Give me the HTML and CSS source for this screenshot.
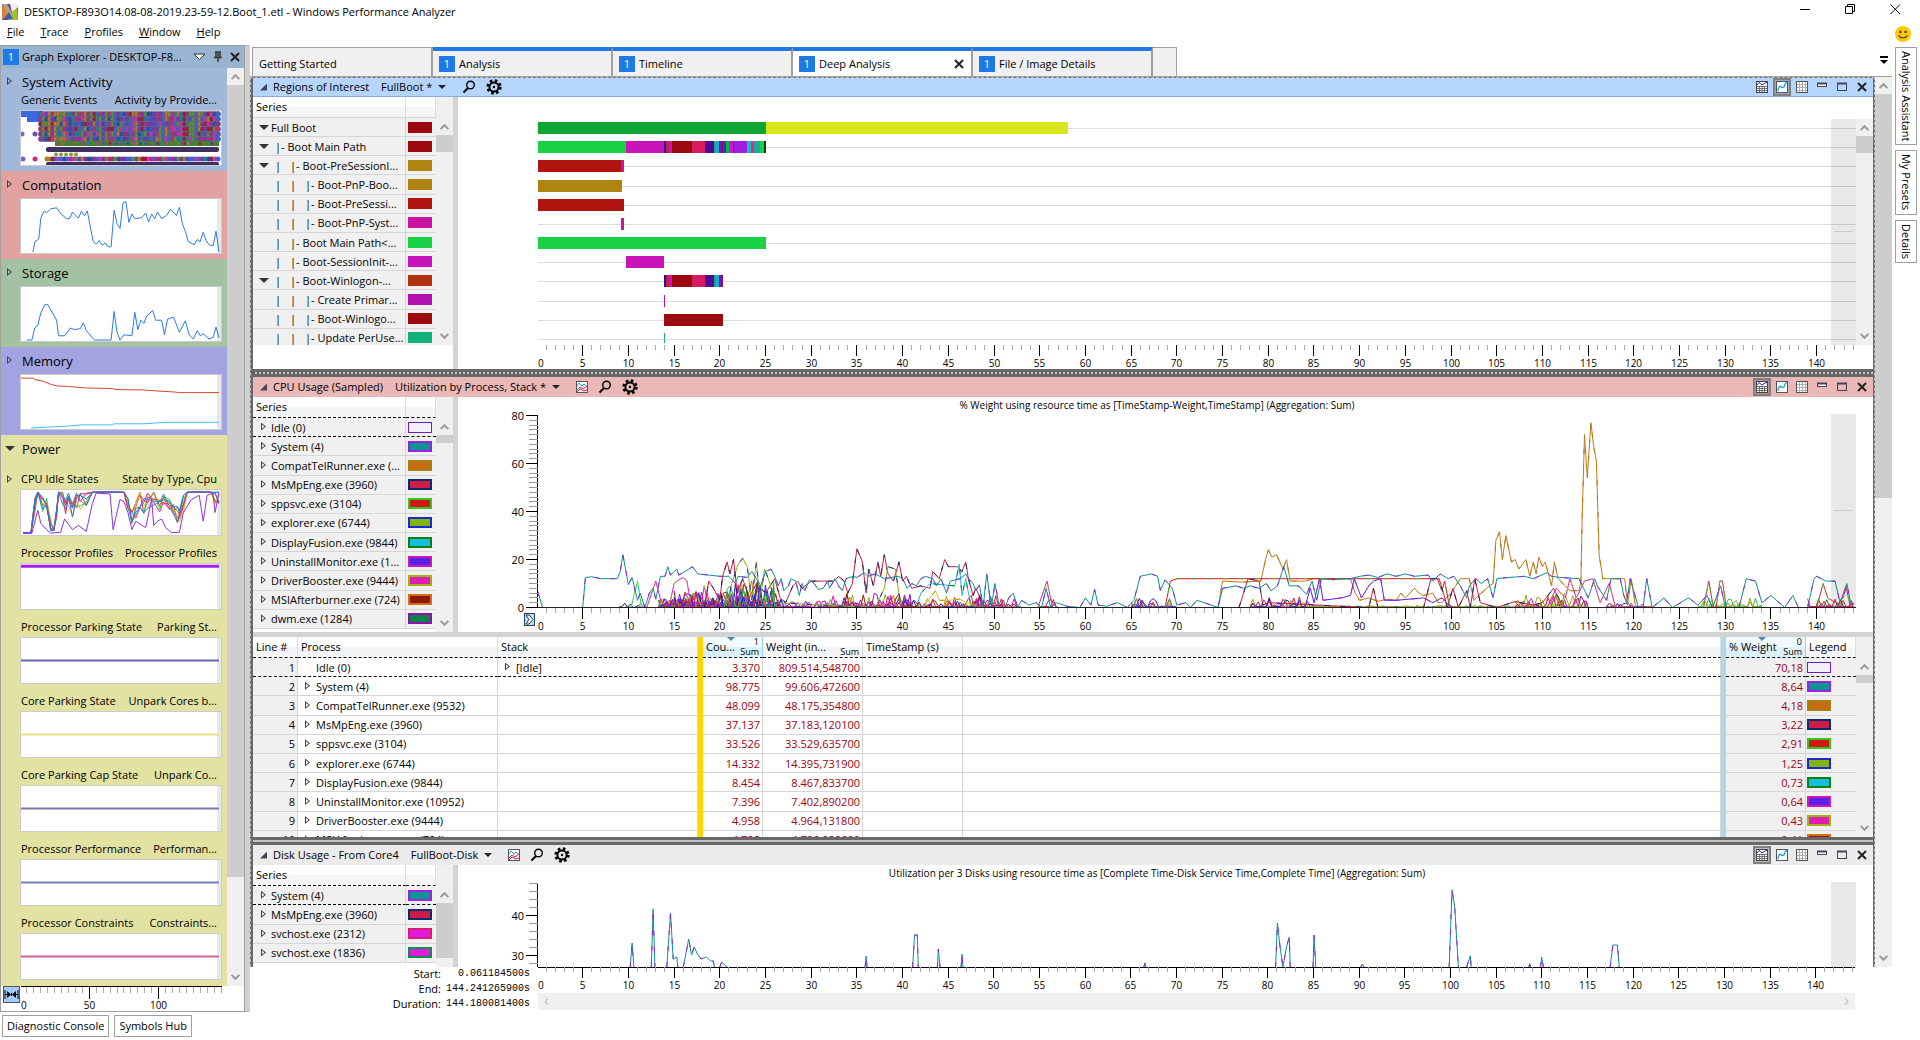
FILE: index.html
```html
<!DOCTYPE html>
<html lang="en">

<head>
    <meta charset="UTF-8">
    <meta name="viewport" content="width=device-width, initial-scale=1.0">
    <title>DESKTOP-F893O14.08-08-2019.23-59-12.Boot_1.etl - Windows Performance Analyzer</title>
    <link rel="stylesheet" href="styles.css">
</head>

<body>
    <!-- shared icons -->
    <svg class="sprite" aria-hidden="true">
        <symbol id="i-search" viewBox="0 0 14 14">
            <circle cx="8.5" cy="5" r="3.8" fill="none" stroke="#000" stroke-width="1.4" />
            <path d="M6 8L1.5 12.5" stroke="#000" stroke-width="2" />
        </symbol>
        <symbol id="i-gear" viewBox="0 0 16 16">
            <circle cx="8" cy="8" r="6.4" fill="none" stroke="#000" stroke-width="2.6" stroke-dasharray="2.6 2.43" />
            <circle cx="8" cy="8" r="4.6" fill="none" stroke="#000" stroke-width="2" />
            <circle cx="8" cy="8" r="1.2" />
        </symbol>
        <symbol id="i-preset" viewBox="0 0 12 12">
            <rect x=".5" y=".5" width="11" height="11" fill="#fff" stroke="#555" />
            <path d="M1 5L3 2L6 5L8 3L11 6" fill="none" stroke="#16a0e0" />
            <path d="M1 9L4 6L7 8L11 5M1 11L4 8L8 10L11 9" fill="none" stroke="#d02040" />
        </symbol>
        <symbol id="i-both" viewBox="0 0 12 12">
            <rect x=".5" y=".5" width="11" height="11" fill="#fff" stroke="#444" />
            <path d="M1 4L3 1.5L6 4L9 2L11 1.5" fill="none" stroke="#2020c0" />
            <path d="M1 5.5H11M1 7.5H11M1 9.5H11M3.5 5V11M6 5V11M8.5 5V11" stroke="#555" stroke-width=".8" />
        </symbol>
        <symbol id="i-graph" viewBox="0 0 12 12">
            <rect x=".5" y=".5" width="11" height="11" fill="#fff" stroke="#555" />
            <path d="M2 10V8L4 5L6 6.5L8 6L9 3L11 1" fill="none" stroke="#0a9ad8" stroke-width="1.2" />
        </symbol>
        <symbol id="i-table" viewBox="0 0 12 12">
            <rect x=".5" y=".5" width="11" height="11" fill="#fff" stroke="#555" />
            <path d="M1 3.5H11M1 6.5H11M1 9.5H11M3.5 1V11M6.5 1V11M9.5 1V11" stroke="#b0b0b0" />
        </symbol>
        <symbol id="i-collapse" viewBox="0 0 12 12">
            <rect x="1.5" y="2.5" width="9" height="3" fill="#fff" stroke="#445" />
            <path d="M1 2.5H11" stroke="#445" stroke-width="2" />
        </symbol>
        <symbol id="i-max" viewBox="0 0 12 12">
            <rect x="1.5" y="2.5" width="9" height="7" fill="none" stroke="#445" />
            <path d="M1 2.5H11" stroke="#445" stroke-width="2" />
        </symbol>
        <symbol id="i-close" viewBox="0 0 12 12">
            <path d="M2 2L10 10M10 2L2 10" stroke="#222" stroke-width="2" />
        </symbol>
        <symbol id="i-up" viewBox="0 0 10 10">
            <path d="M2 7L5 4L8 7" fill="none" stroke="#999" stroke-width="1.5" />
        </symbol>
        <symbol id="i-down" viewBox="0 0 10 10">
            <path d="M2 3L5 6L8 3" fill="none" stroke="#999" stroke-width="1.5" />
        </symbol>
    </svg>

    <header class="titlebar">
        <svg class="app-icon" width="16" height="16" viewBox="0 0 16 16">
            <rect width="16" height="16" fill="#5a4a9a" />
            <path d="M0 1L7 9L0 16Z" fill="#e08030" />
            <path d="M0 0H5L10 9L8 14Z" fill="#b8a080" />
            <path d="M8 14L10 6L15 1L16 16H6Z" fill="#a0c030" />
            <path d="M8 0H16V3L10 8Z" fill="#f0f0f0" />
            <path d="M2 15L7 8L11 15Z" fill="#3860b0" />
        </svg>
        <span class="title">DESKTOP-F893O14.08-08-2019.23-59-12.Boot_1.etl - Windows Performance Analyzer</span>
        <div class="window-buttons">
            <button aria-label="Minimize"><svg width="11" height="11"><path d="M0 5.5H10" stroke="#000" /></svg></button>
            <button aria-label="Restore"><svg width="11" height="11"><path d="M.5 2.5H7.5V9.5H.5ZM2.5 2V.5H9.5V7.5H8" fill="none" stroke="#000" /></svg></button>
            <button aria-label="Close"><svg width="11" height="11"><path d="M.5 .5L10 10M10 .5L.5 10" stroke="#000" /></svg></button>
        </div>
    </header>

    <nav class="menubar">
        <button><u>F</u>ile</button>
        <button><u>T</u>race</button>
        <button><u>P</u>rofiles</button>
        <button><u>W</u>indow</button>
        <button><u>H</u>elp</button>
        <button class="smiley" aria-label="Feedback">
            <svg width="16" height="16"><circle cx="8" cy="8" r="8" fill="#fcc800" /><circle cx="5.5" cy="6" r="1.3" fill="#444" /><circle cx="10.5" cy="6" r="1.3" fill="#444" /><path d="M3.5 9.500Q8 14.500 12.5 9.500" fill="none" stroke="#444" stroke-width="1.2" /></svg>
        </button>
    </nav>

    <div class="workspace">
        <aside class="explorer">
            <div class="explorer-head">
                <span class="badge">1</span>
                <span class="explorer-title">Graph Explorer - DESKTOP-F8...</span>
                <button aria-label="Options"><svg width="14" height="12"><path d="M1 3H12L6.5 8.5Z" fill="#fff" stroke="#333" /></svg></button>
                <button aria-label="Pin"><svg width="10" height="12"><path d="M2 1H8M3 1V6M7 1V6M1 6.5H9M5 7V11" stroke="#333" stroke-width="1.5" /><path d="M4 1H6V6H4Z" fill="#555" /></svg></button>
                <button aria-label="Close"><svg width="12" height="12"><use href="#i-close" /></svg></button>
            </div>
            <div class="explorer-body">
                <div class="groups">
                    <section class="group g-activity">
                        <h2><i class="tri closed"></i>System Activity</h2>
                        <div class="pair tight"><span>Generic Events</span><span>Activity by Provide...</span></div>
                        <div class="thumb tall" data-thumb="events"></div>
                    </section>
                    <section class="group g-computation">
                        <h2><i class="tri closed"></i>Computation</h2>
                        <div class="thumb tall" data-thumb="computation"></div>
                    </section>
                    <section class="group g-storage">
                        <h2><i class="tri closed"></i>Storage</h2>
                        <div class="thumb tall" data-thumb="storage"></div>
                    </section>
                    <section class="group g-memory">
                        <h2><i class="tri closed"></i>Memory</h2>
                        <div class="thumb tall" data-thumb="memory"></div>
                    </section>
                    <section class="group g-power">
                        <h2><i class="tri open"></i>Power</h2>
                        <div class="pair"><i class="tri closed"></i><span>CPU Idle States</span><span>State by Type, Cpu</span></div>
                        <div class="thumb" data-thumb="idle"></div>
                        <div class="pair"><span>Processor Profiles</span><span>Processor Profiles</span></div>
                        <div class="thumb" data-thumb="profiles"></div>
                        <div class="pair"><span>Processor Parking State</span><span>Parking St...</span></div>
                        <div class="thumb" data-thumb="parking"></div>
                        <div class="pair"><span>Core Parking State</span><span>Unpark Cores b...</span></div>
                        <div class="thumb" data-thumb="core"></div>
                        <div class="pair"><span>Core Parking Cap State</span><span>Unpark Co...</span></div>
                        <div class="thumb" data-thumb="cap"></div>
                        <div class="pair"><span>Processor Performance</span><span>Performan...</span></div>
                        <div class="thumb" data-thumb="performance"></div>
                        <div class="pair"><span>Processor Constraints</span><span>Constraints...</span></div>
                        <div class="thumb" data-thumb="constraints"></div>
                    </section>
                </div>
                <div class="scrollbar">
                    <svg class="arrow" viewBox="0 0 10 10"><use href="#i-up" /></svg>
                    <div class="grip grip-explorer"></div>
                    <svg class="arrow end" viewBox="0 0 10 10"><use href="#i-down" /></svg>
                </div>
            </div>
            <div class="explorer-axis">
                <button class="fit" aria-label="Fit"><svg width="15" height="15"><path d="M1 3V12M14 3V12M1 7.5H6M14 7.5H9M7.5 6V9" stroke="#000" /><path d="M3 4L7 7.5L3 11ZM12 4L8 7.5L12 11Z" /></svg></button>
                <div class="axis-small" id="explorer-axis"></div>
            </div>
        </aside>

        <main class="main">
            <div class="tabs">
                <button class="tab plain">Getting Started</button>
                <button class="tab"><span class="badge">1</span>Analysis</button>
                <button class="tab"><span class="badge">1</span>Timeline</button>
                <button class="tab active"><span class="badge">1</span>Deep Analysis<svg class="tab-close" width="12" height="12"><use href="#i-close" /></svg></button>
                <button class="tab"><span class="badge">1</span>File / Image Details</button>
                <span class="tab-stub"></span>
                <button class="tab-menu" aria-label="Tabs"><svg width="8" height="8"><path d="M0 0H8V2H0ZM0 4H8L4 8Z" /></svg></button>
            </div>

            <div class="document">
                <div class="panes">
                    <section class="pane">
                        <div class="pane-head blue">
                            <i class="corner"></i>
                            <h3>Regions of Interest</h3>
                            <button class="preset">FullBoot *</button>
                            <button class="tool" aria-label="Search"><svg width="14" height="14"><use href="#i-search" /></svg></button>
                            <button class="tool" aria-label="Settings"><svg width="16" height="16"><use href="#i-gear" /></svg></button>
                            <div class="views">
                                <button aria-label="Graph and table"><svg width="12" height="12"><use href="#i-both" /></svg></button>
                                <button class="on" aria-label="Graph"><svg width="12" height="12"><use href="#i-graph" /></svg></button>
                                <button aria-label="Table"><svg width="12" height="12"><use href="#i-table" /></svg></button>
                                <button aria-label="Collapse"><svg width="12" height="12"><use href="#i-collapse" /></svg></button>
                                <button aria-label="Maximize"><svg width="12" height="12"><use href="#i-max" /></svg></button>
                                <button aria-label="Close"><svg width="12" height="12"><use href="#i-close" /></svg></button>
                            </div>
                        </div>
                        <div class="pane-body regions">
                            <div class="series-box">
                                <table class="series tree">
                                    <thead><tr><th>Series</th><th></th></tr></thead>
                                    <tbody>
                                        <tr><td><i class="tri open"></i>Full Boot</td><td><b class="swatch s-dark"></b></td></tr>
                                        <tr><td><i class="tri open"></i><i class="gap"></i>|- Boot Main Path</td><td><b class="swatch s-dark"></b></td></tr>
                                        <tr><td><i class="tri open"></i><i class="gap"></i><i class="pipe">|</i>|- Boot-PreSessionI...</td><td><b class="swatch s-gold"></b></td></tr>
                                        <tr><td><i class="tri"></i><i class="gap"></i><i class="pipe">|</i><i class="pipe">|</i>|- Boot-PnP-Boo...</td><td><b class="swatch s-gold"></b></td></tr>
                                        <tr><td><i class="tri"></i><i class="gap"></i><i class="pipe">|</i><i class="pipe">|</i>|- Boot-PreSessi...</td><td><b class="swatch s-red"></b></td></tr>
                                        <tr><td><i class="tri"></i><i class="gap"></i><i class="pipe">|</i><i class="pipe">|</i>|- Boot-PnP-Syst...</td><td><b class="swatch s-pink"></b></td></tr>
                                        <tr><td><i class="tri"></i><i class="gap"></i><i class="pipe">|</i>|- Boot Main Path&lt;...</td><td><b class="swatch s-green"></b></td></tr>
                                        <tr><td><i class="tri"></i><i class="gap"></i><i class="pipe">|</i>|- Boot-SessionInit-...</td><td><b class="swatch s-magenta"></b></td></tr>
                                        <tr><td><i class="tri open"></i><i class="gap"></i><i class="pipe">|</i>|- Boot-Winlogon-...</td><td><b class="swatch s-rust"></b></td></tr>
                                        <tr><td><i class="tri"></i><i class="gap"></i><i class="pipe">|</i><i class="pipe">|</i>|- Create Primar...</td><td><b class="swatch s-purple"></b></td></tr>
                                        <tr><td><i class="tri"></i><i class="gap"></i><i class="pipe">|</i><i class="pipe">|</i>|- Boot-Winlogo...</td><td><b class="swatch s-dark"></b></td></tr>
                                        <tr><td><i class="tri"></i><i class="gap"></i><i class="pipe">|</i><i class="pipe">|</i>|- Update PerUse...</td><td><b class="swatch s-teal"></b></td></tr>
                                    </tbody>
                                </table>
                                <div class="scrollbar under-head">
                                    <svg class="arrow" viewBox="0 0 10 10"><use href="#i-up" /></svg>
                                    <div class="grip"></div>
                                    <svg class="arrow end" viewBox="0 0 10 10"><use href="#i-down" /></svg>
                                </div>
                            </div>
                            <div class="splitter-v"></div>
                            <div class="chart" id="regions-chart"></div>
                            <div class="scrollbar chart-scroll">
                                <svg class="arrow" viewBox="0 0 10 10"><use href="#i-up" /></svg>
                                <div class="grip"></div>
                                <svg class="arrow end" viewBox="0 0 10 10"><use href="#i-down" /></svg>
                            </div>
                        </div>
                    </section>

                    <div class="splitter-pane dotted"></div>

                    <section class="pane">
                        <div class="pane-head pink">
                            <i class="corner"></i>
                            <h3>CPU Usage (Sampled)</h3>
                            <button class="preset">Utilization by Process, Stack *</button>
                            <button class="tool" aria-label="Presets"><svg width="12" height="12"><use href="#i-preset" /></svg></button>
                            <button class="tool" aria-label="Search"><svg width="14" height="14"><use href="#i-search" /></svg></button>
                            <button class="tool" aria-label="Settings"><svg width="16" height="16"><use href="#i-gear" /></svg></button>
                            <div class="views">
                                <button class="on" aria-label="Graph and table"><svg width="12" height="12"><use href="#i-both" /></svg></button>
                                <button aria-label="Graph"><svg width="12" height="12"><use href="#i-graph" /></svg></button>
                                <button aria-label="Table"><svg width="12" height="12"><use href="#i-table" /></svg></button>
                                <button aria-label="Collapse"><svg width="12" height="12"><use href="#i-collapse" /></svg></button>
                                <button aria-label="Maximize"><svg width="12" height="12"><use href="#i-max" /></svg></button>
                                <button aria-label="Close"><svg width="12" height="12"><use href="#i-close" /></svg></button>
                            </div>
                        </div>
                        <div class="pane-body cpu">
                            <div class="series-box">
                                <table class="series focus">
                                    <thead><tr><th>Series</th><th></th></tr></thead>
                                    <tbody>
                                        <tr><td><i class="tri closed"></i>Idle (0)</td><td><b class="swatch p-idle"></b></td></tr>
                                        <tr><td><i class="tri closed"></i>System (4)</td><td><b class="swatch p-system"></b></td></tr>
                                        <tr><td><i class="tri closed"></i>CompatTelRunner.exe (...</td><td><b class="swatch p-compat"></b></td></tr>
                                        <tr><td><i class="tri closed"></i>MsMpEng.exe (3960)</td><td><b class="swatch p-msmp"></b></td></tr>
                                        <tr><td><i class="tri closed"></i>sppsvc.exe (3104)</td><td><b class="swatch p-spp"></b></td></tr>
                                        <tr><td><i class="tri closed"></i>explorer.exe (6744)</td><td><b class="swatch p-explorer"></b></td></tr>
                                        <tr><td><i class="tri closed"></i>DisplayFusion.exe (9844)</td><td><b class="swatch p-fusion"></b></td></tr>
                                        <tr><td><i class="tri closed"></i>UninstallMonitor.exe (1...</td><td><b class="swatch p-uninstall"></b></td></tr>
                                        <tr><td><i class="tri closed"></i>DriverBooster.exe (9444)</td><td><b class="swatch p-driver"></b></td></tr>
                                        <tr><td><i class="tri closed"></i>MSIAfterburner.exe (724)</td><td><b class="swatch p-msi"></b></td></tr>
                                        <tr><td><i class="tri closed"></i>dwm.exe (1284)</td><td><b class="swatch p-dwm"></b></td></tr>
                                    </tbody>
                                </table>
                                <div class="scrollbar under-head">
                                    <svg class="arrow" viewBox="0 0 10 10"><use href="#i-up" /></svg>
                                    <div class="grip short"></div>
                                    <svg class="arrow end" viewBox="0 0 10 10"><use href="#i-down" /></svg>
                                </div>
                            </div>
                            <div class="splitter-v"></div>
                            <div class="chart" id="cpu-chart">
                                <button class="expand" aria-label="Expand axis"><svg width="9" height="11"><path d="M1 1H4L8 5.5L4 10H1L4 5.5Z" fill="#fff" stroke="#334" /></svg></button>
                            </div>
                            <div class="gutter"></div>
                        </div>
                        <div class="splitter-h"></div>
                        <div class="grid-box">
                            <table class="grid">
                                <colgroup>
                                    <col class="w-line"><col class="w-name"><col class="w-name"><col class="w-bar"><col class="w-count"><col class="w-weight"><col class="w-weight"><col><col class="w-bar"><col class="w-percent"><col class="w-legend">
                                </colgroup>
                                <thead>
                                    <tr><th>Line #</th><th>Process</th><th>Stack</th><th class="gold"></th><th class="sorted">Cou...<sup>1</sup><sub>Sum</sub></th><th>Weight (in...<sub>Sum</sub></th><th>TimeStamp (s)</th><th></th><th class="sky"></th><th class="sorted">% Weight<sup>0</sup><sub>Sum</sub></th><th>Legend</th></tr>
                                </thead>
                                <tbody>
                                    <tr><td>1</td><td><i class="tri"></i>Idle (0)</td><td><i class="tri closed"></i>[Idle]</td><td class="gold"></td><td>3.370</td><td>809.514,548700</td><td></td><td></td><td class="sky"></td><td>70,18</td><td><b class="swatch p-idle"></b></td></tr>
                                    <tr><td>2</td><td><i class="tri closed"></i>System (4)</td><td></td><td class="gold"></td><td>98.775</td><td>99.606,472600</td><td></td><td></td><td class="sky"></td><td>8,64</td><td><b class="swatch p-system"></b></td></tr>
                                    <tr><td>3</td><td><i class="tri closed"></i>CompatTelRunner.exe (9532)</td><td></td><td class="gold"></td><td>48.099</td><td>48.175,354800</td><td></td><td></td><td class="sky"></td><td>4,18</td><td><b class="swatch p-compat"></b></td></tr>
                                    <tr><td>4</td><td><i class="tri closed"></i>MsMpEng.exe (3960)</td><td></td><td class="gold"></td><td>37.137</td><td>37.183,120100</td><td></td><td></td><td class="sky"></td><td>3,22</td><td><b class="swatch p-msmp"></b></td></tr>
                                    <tr><td>5</td><td><i class="tri closed"></i>sppsvc.exe (3104)</td><td></td><td class="gold"></td><td>33.526</td><td>33.529,635700</td><td></td><td></td><td class="sky"></td><td>2,91</td><td><b class="swatch p-spp"></b></td></tr>
                                    <tr><td>6</td><td><i class="tri closed"></i>explorer.exe (6744)</td><td></td><td class="gold"></td><td>14.332</td><td>14.395,731900</td><td></td><td></td><td class="sky"></td><td>1,25</td><td><b class="swatch p-explorer"></b></td></tr>
                                    <tr><td>7</td><td><i class="tri closed"></i>DisplayFusion.exe (9844)</td><td></td><td class="gold"></td><td>8.454</td><td>8.467,833700</td><td></td><td></td><td class="sky"></td><td>0,73</td><td><b class="swatch p-fusion"></b></td></tr>
                                    <tr><td>8</td><td><i class="tri closed"></i>UninstallMonitor.exe (10952)</td><td></td><td class="gold"></td><td>7.396</td><td>7.402,890200</td><td></td><td></td><td class="sky"></td><td>0,64</td><td><b class="swatch p-uninstall"></b></td></tr>
                                    <tr><td>9</td><td><i class="tri closed"></i>DriverBooster.exe (9444)</td><td></td><td class="gold"></td><td>4.958</td><td>4.964,131800</td><td></td><td></td><td class="sky"></td><td>0,43</td><td><b class="swatch p-driver"></b></td></tr>
                                    <tr><td>10</td><td><i class="tri closed"></i>MSIAfterburner.exe (724)</td><td></td><td class="gold"></td><td>4.738</td><td>4.736,088600</td><td></td><td></td><td class="sky"></td><td>0,41</td><td><b class="swatch p-msi"></b></td></tr>
                                </tbody>
                            </table>
                            <div class="scrollbar under-head">
                                <svg class="arrow" viewBox="0 0 10 10"><use href="#i-up" /></svg>
                                <div class="grip short"></div>
                                <svg class="arrow end" viewBox="0 0 10 10"><use href="#i-down" /></svg>
                            </div>
                        </div>
                    </section>

                    <div class="splitter-pane"></div>

                    <section class="pane last">
                        <div class="pane-head grey">
                            <i class="corner"></i>
                            <h3>Disk Usage - From Core4</h3>
                            <button class="preset">FullBoot-Disk</button>
                            <button class="tool" aria-label="Presets"><svg width="12" height="12"><use href="#i-preset" /></svg></button>
                            <button class="tool" aria-label="Search"><svg width="14" height="14"><use href="#i-search" /></svg></button>
                            <button class="tool" aria-label="Settings"><svg width="16" height="16"><use href="#i-gear" /></svg></button>
                            <div class="views">
                                <button class="on" aria-label="Graph and table"><svg width="12" height="12"><use href="#i-both" /></svg></button>
                                <button aria-label="Graph"><svg width="12" height="12"><use href="#i-graph" /></svg></button>
                                <button aria-label="Table"><svg width="12" height="12"><use href="#i-table" /></svg></button>
                                <button aria-label="Collapse"><svg width="12" height="12"><use href="#i-collapse" /></svg></button>
                                <button aria-label="Maximize"><svg width="12" height="12"><use href="#i-max" /></svg></button>
                                <button aria-label="Close"><svg width="12" height="12"><use href="#i-close" /></svg></button>
                            </div>
                        </div>
                        <div class="pane-body disk">
                            <div class="series-box">
                                <table class="series focus">
                                    <thead><tr><th>Series</th><th></th></tr></thead>
                                    <tbody>
                                        <tr><td><i class="tri closed"></i>System (4)</td><td><b class="swatch p-system"></b></td></tr>
                                        <tr><td><i class="tri closed"></i>MsMpEng.exe (3960)</td><td><b class="swatch p-msmp"></b></td></tr>
                                        <tr><td><i class="tri closed"></i>svchost.exe (2312)</td><td><b class="swatch p-svc1"></b></td></tr>
                                        <tr><td><i class="tri closed"></i>svchost.exe (1836)</td><td><b class="swatch p-svc2"></b></td></tr>
                                    </tbody>
                                </table>
                                <div class="scrollbar under-head">
                                    <svg class="arrow" viewBox="0 0 10 10"><use href="#i-up" /></svg>
                                    <div class="grip long"></div>
                                </div>
                            </div>
                            <div class="splitter-v"></div>
                            <div class="chart" id="disk-chart"></div>
                            <div class="gutter"></div>
                        </div>
                    </section>
                </div>
                <div class="scrollbar doc-scroll">
                    <svg class="arrow" viewBox="0 0 10 10"><use href="#i-up" /></svg>
                    <div class="grip grip-doc"></div>
                    <svg class="arrow end" viewBox="0 0 10 10"><use href="#i-down" /></svg>
                </div>
            </div>

            <div class="timeline">
                <dl class="range">
                    <dt>Start:</dt><dd>0.061184500s</dd>
                    <dt>End:</dt><dd>144.241265900s</dd>
                    <dt>Duration:</dt><dd>144.180081400s</dd>
                </dl>
                <div class="timeline-axis">
                    <div id="timeline-axis"></div>
                    <div class="hscroll"><span>&#8249;</span><span>&#8250;</span></div>
                </div>
            </div>
        </main>

        <aside class="side-tabs">
            <button>Analysis Assistant</button>
            <button>My Presets</button>
            <button>Details</button>
        </aside>
    </div>

    <footer class="bottom-tabs">
        <button>Diagnostic Console</button>
        <button>Symbols Hub</button>
    </footer>

    <script src="script.js"></script>
</body>

</html>
```
FILE: styles.css
```css
* {
    box-sizing: border-box;
}

body {
    margin: 0;
    height: 100vh;
    display: flex;
    flex-direction: column;
    overflow: hidden;
    background: #fff;
    color: #000;
    font-family: "Open Sans", "Noto Sans", sans-serif;
    font-size: 11px;
    line-height: 16px;
}

button {
    font: inherit;
    color: inherit;
    background: none;
    border: 0;
    padding: 0;
    white-space: nowrap;
}

h2,
h3 {
    margin: 0;
    font-weight: normal;
}

svg {
    display: block;
}

.sprite {
    position: absolute;
    width: 0;
    height: 0;
}

/* window chrome */
.titlebar {
    display: flex;
    align-items: center;
    height: 23px;
    padding: 0 2px;
    gap: 6px;
}

.window-buttons {
    display: flex;
    margin-left: auto;
    padding-bottom: 4px;
}

.window-buttons button {
    width: 45px;
    display: flex;
    justify-content: center;
}

.menubar {
    display: flex;
    align-items: center;
    gap: 16px;
    height: 22px;
    padding: 0 9px 4px 7px;
}

.smiley {
    margin: 4px 0 0 auto;
}

.workspace {
    flex: 1;
    display: flex;
    min-height: 0;
}

.badge {
    width: 16px;
    height: 16px;
    background: #1e78e6;
    color: #fff;
    text-align: center;
    flex-shrink: 0;
}

/* graph explorer */
.explorer {
    width: 250px;
    display: flex;
    flex-direction: column;
    border: 1px solid #a0a0a0;
    border-width: 1px 0 1px 1px;
    border-right: 5px solid #d0d0d0;
    flex-shrink: 0;
}

.explorer-head {
    display: flex;
    align-items: center;
    gap: 6px;
    height: 22px;
    padding: 0 3px 0 2px;
    background: #99b4d1;
    border-right: 1px solid #a0a0a0;
}

.explorer-head .badge {
    margin-right: -3px;
}

.explorer-title {
    flex: 1;
    min-width: 0;
    white-space: nowrap;
}

.explorer-body {
    flex: 1;
    display: flex;
    min-height: 0;
    border-right: 1px solid #a0a0a0;
}

.groups {
    flex: 1;
    overflow: hidden;
    background: #e2e2a3;
}

.group {
    padding: 0 5px 5px 19px;
}

.group h2 {
    display: flex;
    align-items: center;
    height: 27px;
    font-size: 13px;
}

.group .tri {
    margin: 0 1px 0 -15px;
}

.g-activity { background: #a2b8da; }
.g-computation { background: #e2a2a2; }
.g-storage { background: #a3c2a3; }
.g-memory { background: #a3a3e2; }
.g-power { background: #e2e2a3; }

.pair {
    display: flex;
    height: 27px;
    padding: 9px 5px 0 1px;
    white-space: nowrap;
}

.pair .tri {
    margin: 4px 0 0 -15px;
}

.group h2 {
    padding-left: 1px;
}

.pair span:last-child {
    margin-left: auto;
}

.pair.tight {
    height: 15px;
    padding-top: 0;
    line-height: 9px;
}

.thumb {
    height: 47px;
    background: #fff;
    border: 1px solid #ccc;
    overflow: hidden;
}

.thumb.tall {
    height: 56px;
}

.explorer-axis {
    display: flex;
    height: 25px;
    border-right: 1px solid #a0a0a0;
}

.fit {
    width: 17px;
    height: 17px;
    margin-left: 2px;
    background: #a8ccf8;
    border: 1px solid #555;
}

.axis-small {
    flex: 1;
    margin-right: 22px;
}

/* tree triangles */
.tri {
    display: inline-block;
    width: 15px;
    height: 9px;
    flex-shrink: 0;
    position: relative;
}

.tri::before {
    content: "";
    position: absolute;
}

.tri.closed::before {
    left: 1px;
    top: 0;
    width: 5px;
    height: 8px;
    background: #444;
    clip-path: polygon(0 0, 100% 50%, 0 100%, 0 0, 20% 25%, 20% 75%, 70% 50%, 20% 25%);
}

.tri.open::before {
    left: -1px;
    top: 2px;
    border: 5px solid transparent;
    border-top-color: #333;
    border-bottom: 0;
}

/* scrollbars */
.scrollbar {
    width: 17px;
    display: flex;
    flex-direction: column;
    flex-shrink: 0;
    background: #f0f0f0;
}

.scrollbar .arrow {
    width: 13px;
    height: 13px;
    margin: 2px;
    flex-shrink: 0;
}

.scrollbar .end {
    margin-top: auto;
}

.scrollbar.under-head {
    padding-top: 21px;
}

.grip {
    height: 17px;
    background: #cdcdcd;
}

.grip.short {
    height: 8px;
}

.grip.long {
    height: 55px;
}

.grip-explorer {
    height: 792px;
}

.grip-doc {
    height: 404px;
}

.doc-scroll {
    width: 17px;
}

/* tabs */
.main {
    flex: 1;
    display: flex;
    flex-direction: column;
    min-width: 0;
}

.tabs {
    display: flex;
    align-items: flex-end;
    height: 31px;
    padding-left: 2px;
}

.tab {
    display: flex;
    align-items: center;
    gap: 4px;
    width: 180px;
    height: 29px;
    padding: 0 6px;
    background: #f0f0f0;
    border-top: 4px solid #1e78e6;
    border-right: 2px solid #a0a0a0;
}

.tab.plain {
    width: 181px;
    border-top: 1px solid #a0a0a0;
    border-left: 1px solid #a0a0a0;
    padding-top: 3px;
}

.tab.active {
    background: #fff;
}

.tab-close {
    margin-left: auto;
}

.tab-stub {
    width: 24px;
    height: 29px;
    background: #f0f0f0;
    border: 1px solid #a0a0a0;
    border-width: 1px 1px 0 0;
}

.tab-menu {
    margin: 0 4px 12px auto;
}

/* document */
.document {
    flex: 1;
    display: flex;
    min-height: 0;
    border-top: 1px solid #a0a0a0;
}

.panes {
    flex: 1;
    display: flex;
    flex-direction: column;
    min-width: 0;
    padding: 0 1px 0 2px;
    background: #686868;
    border: 1px dashed #bbb;
    border-bottom: 0;
}

.pane {
    background: #fff;
    flex-shrink: 0;
}

.pane.last {
    flex: 1;
    overflow: hidden;
    min-height: 0;
}

.pane-head {
    display: flex;
    align-items: center;
    height: 20px;
    padding: 0 2px 0 7px;
}

.pane-head h3 {
    margin: 0 12px 0 6px;
    font-size: 11px;
    white-space: nowrap;
}

.pane-head.blue {
    height: 19px;
    background: #b5d5ff;
    border-bottom: 1px solid #8aacdc;
}

.pane-head.pink { background: #eab8b7; }
.pane-head.grey { background: #ebebeb; }

.corner {
    width: 7px;
    height: 7px;
    background: #445;
    clip-path: polygon(100% 0, 100% 100%, 0 100%);
}

.preset::after {
    content: "";
    display: inline-block;
    margin: 0 11px 2px 6px;
    border: 4px solid transparent;
    border-top-color: #222;
    border-bottom: 0;
}

.tool {
    margin: 0 5px;
}

.views {
    display: flex;
    gap: 2px;
    margin-left: auto;
}

.views button {
    width: 18px;
    height: 18px;
    display: flex;
    align-items: center;
    justify-content: center;
    border: 1px solid transparent;
}

.views .on {
    background: rgba(0, 0, 0, 0.2);
    border: 2px solid #808080;
}

.pane-body {
    display: flex;
}

.regions { height: 272px; }
.cpu { height: 235px; }
.disk { height: 102px; }

.series-box {
    width: 200px;
    display: flex;
    overflow: hidden;
    flex-shrink: 0;
}

.regions .series-box {
    margin-bottom: 24px;
}

.splitter-v {
    width: 5px;
    background: #d3d3d3;
}

.splitter-h {
    height: 5px;
    background: #d3d3d3;
}

.splitter-pane {
    height: 8px;
    border: 2px solid #686868;
    border-width: 3px 0;
    background: #c0c0c0;
    flex-shrink: 0;
}

.splitter-pane.dotted {
    background: repeating-linear-gradient(90deg, #555 0 2px, #ccc 2px 4px);
}

.chart {
    flex: 1;
    min-width: 0;
    position: relative;
}

.chart-scroll {
    margin: 22px 0 24px;
}

.gutter {
    width: 17px;
}

.expand {
    position: absolute;
    left: 66px;
    bottom: 6px;
    width: 11px;
    height: 13px;
    background: #bcdcf4;
    border: 1px solid #246;
}

/* series lists and grid */
table {
    border-collapse: separate;
    border-spacing: 0;
    table-layout: fixed;
}

th,
td {
    padding: 0;
    overflow: hidden;
    white-space: nowrap;
    text-align: left;
    font-weight: normal;
}

thead tr {
    height: 21px;
}

thead th {
    background: linear-gradient(#fff 50%, #f4f5f7 50%);
    border-right: 1px solid #ddd;
    border-bottom: 1px solid #d5d5d5;
}

tbody td {
    height: 19px;
    line-height: 17px;
    border-bottom: 1px solid #d6d6d6;
    border-right: 1px solid #d6d6d6;
}

.series {
    width: 183px;
    flex-shrink: 0;
}

.series th:first-child {
    width: 153px;
    padding-left: 3px;
}

.series tbody {
    background: #f0f0f0;
}

.series td:first-child {
    padding-left: 7px;
}

.series td:last-child {
    border-right: 0;
    padding-left: 2px;
}

.series .tri {
    width: 11px;
}

.tree {
    height: 251px;
}

.cpu .series {
    height: 232px;
}

.disk .series {
    height: 98px;
}

.gap {
    display: inline-block;
    width: 4px;
}

.pipe {
    display: inline-block;
    width: 15px;
    font-style: normal;
}

.focus thead th,
.grid thead th {
    border-bottom: 1px dashed #000;
}

.focus tbody tr:first-child td,
.grid tbody tr:first-child td {
    border-bottom: 1px dashed #000;
}

.swatch {
    display: block;
    width: 24px;
    height: 11px;
    border: 2px solid transparent;
}

.s-dark { background: #9c0a10; border: 0; }
.s-gold { background: #b0850f; border: 0; }
.s-red { background: #b0140e; border: 0; }
.s-pink { background: #c814a0; border: 0; }
.s-green { background: #1ad044; border: 0; }
.s-magenta { background: #c814b8; border: 0; }
.s-rust { background: #b03010; border: 0; }
.s-purple { background: #b410b0; border: 0; }
.s-teal { background: #10b07a; border: 0; }

.p-idle { border: 1px solid #6a20c0; background: #f2f0f6; }
.p-system { border-color: #9c20e8; background: #0a9490; }
.p-compat { border-color: #a8820e; background: #c86c14; }
.p-msmp { border-color: #062c70; background: #d01c44; }
.p-spp { border-color: #34c818; background: #d01818; }
.p-explorer { border-color: #1c28d0; background: #84b410; }
.p-fusion { border-color: #088414; background: #1cbcdc; }
.p-uninstall { border-color: #cc18b8; background: #5a20e4; }
.p-driver { border-color: #a0b010; background: #e01cb4; }
.p-msi { border-color: #d47014; background: #901808; }
.p-dwm { border-color: #9010b0; background: #088444; }
.p-svc1 { border-color: #e01c70; background: #e01cdc; }
.p-svc2 { border-color: #088c50; background: #e01cdc; }

.grid-box {
    display: flex;
    height: 200px;
    overflow: hidden;
}

.grid {
    width: 100%;
    height: 213px;
}

.w-line { width: 45px; }
.w-name { width: 200px; }
.w-bar { width: 5px; }
.w-count { width: 60px; }
.w-weight { width: 100px; }
.w-percent { width: 80px; }
.w-legend { width: 50px; }

.grid .tri.closed::before {
    left: 4px;
}

.grid th {
    position: relative;
    padding-left: 3px;
}

.grid sup,
.grid sub {
    position: absolute;
    right: 3px;
    font-size: 9px;
    line-height: 9px;
}

.grid sup { top: 0; }
.grid sub { bottom: 1px; }

.grid th.sorted {
    background: linear-gradient(#f0faff 50%, #dcf0fa 50%);
    border-right-color: #96d4f4;
}

.grid th.sorted::before {
    content: "";
    position: absolute;
    top: 0;
    left: 40%;
    border: 4px solid transparent;
    border-top-color: #4c8cb0;
    border-bottom: 0;
}

.grid td:nth-child(1) {
    background: #f0f0f0;
    text-align: right;
    padding-right: 2px;
}

.grid td:nth-child(2),
.grid td:nth-child(3) {
    padding-left: 3px;
}

.grid td:nth-child(5),
.grid td:nth-child(6),
.grid td:nth-child(10) {
    text-align: right;
    padding-right: 2px;
    color: #a00010;
}

.grid td:nth-child(10),
.grid td:nth-child(11) {
    background: #f0f0f0;
}

.grid td:nth-child(11) {
    border-right: 0;
    padding-left: 1px;
}

.grid th.gold,
.grid td.gold,
.grid tr:first-child td.gold {
    background: #ffd400;
    border: 0;
}

.grid th.sky,
.grid td.sky,
.grid tr:first-child td.sky {
    background: #add8e6;
    border: 0;
}

/* time range footer */
.timeline {
    display: flex;
    height: 45px;
    padding-right: 37px;
}

.range {
    display: grid;
    grid-template-columns: 191px 1fr;
    grid-auto-rows: 15px;
    width: 280px;
    margin: 0;
    line-height: 14px;
    text-align: right;
}

.range dd {
    margin: 0;
    font-family: "Liberation Mono", monospace;
    font-size: 10px;
}

.timeline-axis {
    flex: 1;
    margin-left: 8px;
    min-width: 0;
}

.hscroll {
    display: flex;
    justify-content: space-between;
    height: 17px;
    padding: 0 6px;
    background: #f0f0f0;
    color: #c0c0c0;
    font-size: 16px;
    line-height: 14px;
}

/* docked tabs */
.side-tabs {
    display: flex;
    flex-direction: column;
    gap: 5px;
    width: 28px;
    padding: 2px 3px;
    flex-shrink: 0;
}

.side-tabs button {
    writing-mode: vertical-rl;
    width: 22px;
    padding: 3px 2px;
    border: 1px solid #a0a0a0;
}

.bottom-tabs {
    display: flex;
    gap: 5px;
    height: 28px;
    padding: 3px 2px;
}

.bottom-tabs button {
    padding: 0 4px;
    border: 1px solid #a0a0a0;
}

svg text {
    font-size: 10px;
}

svg .big {
    font-size: 11px;
}
```
FILE: script.js
```js
const T0 = 0;
const T1 = 144.3;
const PLOT_LEFT = 80;
const ORIGIN = PLOT_LEFT - 1;

// small seeded generator so the background activity is the same on each load
let seed = 7;
function rnd() {
    seed = (seed * 16807) % 2147483647;
    return seed / 2147483647;
}

function svg(w, h, inner) {
    return `<svg width="${w}" height="${h}">${inner}</svg>`;
}

function line(x1, y1, x2, y2, color) {
    return `<path d="M${x1} ${y1}L${x2} ${y2}" stroke="${color}"/>`;
}

function poly(points, color, extra) {
    const p = points.map(q => q[0].toFixed(1) + ',' + q[1].toFixed(1)).join(' ');
    return `<polyline points="${p}" fill="none" stroke="${color}" ${extra || ''}/>`;
}

function timeAxis(left, width, y) {
    const x = t => Math.floor(left + t / T1 * width) + 0.5;
    let out = `<text x="${left + 1}" y="${y + 22}">0</text>`;
    for (let t = 1; t <= 144; t++) {
        if (t % 5 === 0) {
            out += line(x(t), y, x(t), y + 11, '#000');
            out += `<text x="${x(t)}" y="${y + 22}" text-anchor="middle">${t}</text>`;
        } else {
            out += line(x(t), y, x(t), y + 5, '#aaa');
        }
    }
    return out;
}

function valueAxis(min, max, y) {
    let out = line(PLOT_LEFT - 0.5, y(max), PLOT_LEFT - 0.5, y(min), '#000');
    for (let v = Math.ceil(min / 2) * 2; v <= max; v += 2) {
        const py = Math.floor(y(v)) + 0.5;
        const major = max > 60 ? v % 20 === 0 : v % 10 === 0;
        out += line(major ? 68 : 71, py, PLOT_LEFT, py, major ? '#000' : '#999');
        if (major) {
            out += `<text class="big" x="66" y="${py + 4}" text-anchor="end">${v}</text>`;
        }
    }
    return out;
}

/* regions of interest */
const winlogon = [
    [13.9, 14.1, '#300c90'], [14.1, 14.4, '#c01c50'], [14.4, 14.8, '#c814c8'],
    [14.8, 17, '#9c0a10'], [17, 18.4, '#d81c60'], [18.4, 19.4, '#50089c'],
    [19.4, 19.6, '#10b07a'], [19.6, 19.9, '#20a8d0'], [19.9, 20.1, '#7018c8'], [20.1, 20.4, '#9c0a50']
];
const regions = [
    [[0.1, 25, '#0fa535'], [25, 58.1, '#d8e81c']],
    [[0.1, 9.7, '#1ad044'], [9.7, 13.9, '#c814b8'], ...winlogon,
        [20.4, 20.7, '#1048c0'], [20.7, 21, '#10b050'], [21, 21.4, '#c81cc8'], [21.4, 21.5, '#b01030'],
        [21.5, 23, '#a01ce0'], [23, 23.4, '#18b8d0'], [23.4, 23.7, '#e03070'], [23.7, 24.4, '#20a8a0'], [24.4, 24.8, '#1ad044'], [24.8, 25.1, '#084020']],
    [[0.1, 9.2, '#b0140e'], [9.2, 9.5, '#c814a0']],
    [[0.1, 9.3, '#b0850f']],
    [[0.1, 9.5, '#b0140e']],
    [[9.2, 9.5, '#c814a0']],
    [[0.1, 25.1, '#1ad044']],
    [[9.7, 13.9, '#c814b8']],
    winlogon,
    [[13.9, 14, '#b410b0']],
    [[13.9, 20.4, '#9c0a10']],
    [[13.9, 14, '#10b07a']]
];

function drawRegions() {
    const el = document.getElementById('regions-chart');
    const w = el.clientWidth;
    const width = w - ORIGIN;
    const x = t => Math.round(ORIGIN + t / T1 * width);
    let out = `<rect x="${w - 25}" y="22" width="25" height="226" fill="#e8e8e8"/>`;
    regions.forEach((bars, i) => {
        const y = Math.round(31 + i * 19.17);
        out += line(PLOT_LEFT, y + 0.5, w, y + 0.5, 'rgba(0,0,0,.14)');
        const h = i === 11 ? 10 : 12;
        bars.forEach(b => {
            out += `<rect x="${x(b[0])}" y="${y - 6}" width="${Math.max(1, x(b[1]) - x(b[0]))}" height="${h}" fill="${b[2]}"/>`;
        });
    });
    out += line(w - 22, 134.5, w - 3, 134.5, '#ccc');
    out += timeAxis(ORIGIN, width, 248);
    el.innerHTML = svg(w, 272, out);
}

/* cpu usage: flat lists of time, value */
const cpu = {
    compat: [74.5, 0, 75, 11, 77, 10.6, 79.2, 11, 79.7, 20, 80, 24, 80.4, 21, 80.9, 22, 81.6, 16, 82, 20, 82.4, 11, 84, 11, 85, 12, 89, 12, 89.5, 6, 90, 3, 91, 4, 92, 2.6, 93, 3.4, 94, 3, 94.5, 6, 95, 4, 96, 8, 96.5, 6, 97, 5, 98, 6, 98.6, 2, 99, 2, 100, 6, 101, 12, 102, 12, 102.5, 3, 103, 5, 104.2, 9, 104.6, 10, 104.9, 28, 105.3, 31.5, 105.6, 20, 106, 30, 106.6, 19, 107, 20, 107.4, 16, 108.2, 20, 108.6, 13, 109, 19, 109.3, 14, 109.6, 21, 110, 17, 110.3, 19, 111, 9, 111.3, 19, 111.7, 12, 112.5, 9, 113, 7, 114, 7, 114.2, 11, 114.35, 38, 114.6, 72, 114.9, 54, 115.3, 77, 115.6, 67, 115.9, 61, 116.2, 22, 116.6, 12, 119, 12, 119.3, 1, 119.7, 12, 120.2, 0],
    spp: [68.7, 0, 69.3, 11, 70, 12, 98.5, 12, 99, 7, 99.3, 11, 99.8, 1, 100.3, 0],
    msmp: [18.3, 0, 18.8, 11, 19.3, 8, 20, 3, 20.3, 13, 20.8, 19, 21.1, 14, 21.5, 20, 21.9, 6, 22.5, 12, 23.2, 4, 24, 10, 25, 6, 26, 12, 26.6, 4, 27.2, 2, 28, 9, 28.5, 11, 29, 8, 30, 11, 32.5, 11, 33, 13, 33.6, 11, 34, 6, 34.5, 10, 35, 24.5, 35.6, 19, 36, 6, 36.3, 16, 36.8, 9, 37.3, 19, 37.6, 13, 38, 22, 38.4, 14, 39, 11, 39.6, 19, 40, 11, 40.4, 13, 41, 8, 42, 9, 43, 8, 43.3, 15, 44, 12, 44.6, 20, 45, 17, 46, 17, 46.5, 15, 46.9, 19, 47.2, 12, 47.7, 5, 48, 8, 49, 0],
    msmp2: [76.8, 0, 77.8, 12, 79, 11, 79.4, 1, 80, 2, 91, 0, 91.5, 8, 92, 0, 97, 0, 97.8, 12, 98.7, 12, 99.6, 0, 100.2, 8, 100.8, 0, 101.7, 7, 102.1, 0, 102.6, 12, 103.2, 2, 105, 0, 107, 2.5, 109, 1, 110, 2, 111.2, 8, 112.2, 1],
    explorer: [20.8, 0, 21.3, 10, 22, 18, 22.5, 20.5, 23, 17, 23.5, 3, 24, 19, 24.4, 3, 24.9, 16, 25.5, 10, 26, 2, 37, 0, 38, 8, 38.4, 17, 39.2, 16, 39.8, 1],
    uninstall: [84, 0, 84.6, 8, 85, 2, 85.6, 12, 86, 3, 88, 4, 89, 5, 89.4, 12, 90.2, 4, 91, 9, 91.5, 11, 92.3, 12, 92.7, 3, 94, 3, 97, 4, 98, 2, 99, 4, 100, 0],
    fusion: [41.5, 0, 42, 6, 43, 10, 45.7, 9, 46.2, 18, 46.5, 5, 46.9, 12, 47.4, 2, 48, 0],
    driver: [12, 0, 13, 11, 13.6, 2, 14.5, 1, 15, 10, 15.5, 11.5, 16, 12.5, 16.4, 11, 16.8, 2, 18, 2, 18.3, 9, 18.7, 1, 19, 0, 54.8, 0, 55.8, 11, 56.4, 0, 110.5, 0, 111.5, 8, 112.5, 4, 113, 12, 113.7, 4, 114.6, 11, 115.5, 12, 116.3, 2, 117.3, 10, 118, 0],
    green: [10.3, 0, 11, 11, 11.4, 1, 11.8, 0],
    yellow: [42.2, 0, 43.6, 7, 44, 3, 45, 3, 46.2, 3.5, 47, 2, 48, 1],
    late: [127.6, 0, 128.2, 11, 128.7, 0, 129, 0, 129.4, 11, 129.7, 11, 130.1, 0, 140, 0, 140.7, 10, 141.2, 4, 142.5, 1, 143.2, 9, 143.7, 0],
    system: [0.1, 6.5, 0.6, 0, 5, 0, 5.3, 12.5, 6, 12.8, 7, 12, 8.8, 12, 9.1, 15, 9.4, 22, 10, 9.5, 10.4, 12.5, 11, 3, 11.3, 6, 11.8, 0, 12.3, 6, 12.7, 8, 13, 3.5, 13.5, 13, 14, 13, 14.3, 17, 14.6, 13.5, 15.3, 16, 15.5, 13.5, 16.2, 15, 17, 17, 17.6, 14, 18.8, 13.5, 20, 13, 21, 13, 21.7, 10, 22, 13, 23, 12.5, 23.5, 15, 24, 12, 24.5, 9, 25, 15, 25.6, 16, 26, 13, 26.4, 9, 26.7, 12, 27, 7, 27.5, 9, 27.8, 12, 28.3, 11, 28.7, 5, 29, 10, 29.3, 7, 29.8, 11.5, 30.3, 10, 30.8, 7.5, 31.3, 8, 31.8, 11, 32, 8, 32.6, 12, 33, 9, 33.4, 7, 33.8, 12, 34.6, 13, 35, 12.5, 35.8, 14.5, 36.2, 13, 37, 14, 38, 12, 39.5, 13, 40, 12, 40.5, 8, 41, 10, 41.5, 9, 42, 12, 42.5, 13, 43.3, 12, 43.7, 9, 44.2, 12, 44.8, 6, 45.2, 11, 46.3, 12, 46.9, 14, 47.2, 12, 47.7, 10, 48, 7, 48.4, 9.5, 48.8, 0, 49.2, 14, 49.7, 0, 50.1, 10, 50.6, 0, 51.2, 0, 51.6, 4, 52.1, 6, 52.6, 0, 53, 3, 53.8, 1, 54.6, 2, 55.2, 0, 55.7, 8, 56.2, 0, 56.8, 2, 58, 0.5, 59.4, 0, 60, 4, 60.6, 1, 61, 7.5, 61.4, 1, 62.3, 0.5, 63.5, 2, 64.6, 0, 65.3, 3, 66, 13, 67.2, 14, 67.9, 13, 68.2, 7, 68.7, 11.5, 69.5, 8, 70, 1, 71, 2, 71.5, 0, 72.2, 3, 73, 2, 74.5, 0, 75, 8, 76.5, 9, 77.3, 8, 78, 9, 79, 8, 79.8, 10, 80.3, 7, 81, 9, 81.7, 17, 82.3, 9, 83.3, 9, 84.2, 5.5, 84.8, 11, 85.3, 3, 85.8, 12, 87, 11.6, 89, 12, 90, 13, 91, 13.5, 92, 12.5, 93, 14, 94, 13, 95, 14, 96, 13, 97.5, 13.5, 98, 11, 98.8, 14, 99.7, 12, 100.3, 13, 101, 9, 101.7, 4, 102, 9, 102.7, 12, 103.3, 10, 104, 12, 104.6, 4, 105, 12, 106, 12.4, 108, 13, 109, 12, 110.5, 14.5, 111, 13, 112, 12.5, 114, 12, 115, 4, 115.7, 12, 116, 9, 117, 3, 117.5, 12, 118.5, 12, 118.9, 5, 119.2, 2, 119.6, 12, 120.5, 0, 121, 0, 121.4, 12, 122, 0, 123.3, 4, 124.2, 0, 126, 4, 127, 1, 128, 5, 128.6, 0, 129.5, 9, 130, 0, 131.5, 0, 132.3, 12, 133.3, 11, 134, 2, 135, 5, 136.5, 0, 137.4, 5, 138, 0, 139, 0, 139.7, 12, 140, 13, 141, 11, 142, 11, 142.5, 3, 142.9, 4, 143.3, 10, 143.7, 2, 144.1, 1.5]
};
const colors = {
    compat: ['#c87820', '#a8820e'], spp: ['#d01818', '#34c818'], msmp: ['#d01c44', '#062c70'],
    msmp2: ['#d01c44', '#062c70'], explorer: ['#84b410', '#1c28d0'], uninstall: ['#5a20e4', '#cc18b8'],
    fusion: ['#1cbcdc', '#088414'], driver: ['#e01cb4', '#a0b010'], green: ['#50d030', '#20d0e0'],
    yellow: ['#d8c820', '#a0a010'], late: ['#c03030', '#60c020'], system: ['#0a9490', '#9c20e8']
};
// bursts of small processes: start, end, peak, number of lines
const bursts = [
    [9, 12, 2, 2], [13.3, 20, 4, 18], [15, 27, 7, 12], [20.5, 26, 12, 10], [27, 34, 3, 4], [31.5, 41, 6, 8], [40, 51, 5, 7],
    [48, 53, 4, 4], [55, 57, 6, 2], [65, 70, 4, 6], [78, 85, 5, 5], [84, 110, 1, 3],
    [107, 115, 6, 5], [117, 122, 2, 4], [127, 134, 4, 4], [139, 144, 5, 5]
];
const burstColors = ['#7a10b0', '#d01c44', '#5a20e4', '#cc18b8', '#088444', '#901808', '#84b410', '#1c28d0', '#9010b0', '#d47014', '#30c040', '#e01cb4', '#b0a010', '#102c70'];

function pairs(list, x, y) {
    const out = [];
    for (let i = 0; i < list.length; i += 2) {
        out.push([x(list[i]), y(list[i + 1])]);
    }
    return out;
}

function twoTone(points, pair) {
    return poly(points, pair[0]) + poly(points, pair[1], 'stroke-dasharray="5 11"');
}

function drawCpu() {
    const el = document.getElementById('cpu-chart');
    const w = el.clientWidth;
    const width = w - ORIGIN;
    const x = t => ORIGIN + t / T1 * width;
    const y = v => 210.5 - v * 2.4;
    let out = `<rect x="${w - 25}" y="17" width="25" height="193" fill="#e8e8e8"/>`;
    out += line(w - 22, 113.5, w - 3, 113.5, '#ccc');
    out += `<text x="${w / 2}" y="12" text-anchor="middle">% Weight using resource time as [TimeStamp-Weight,TimeStamp] (Aggregation: Sum)</text>`;
    bursts.forEach(b => {
        for (let n = 0; n < b[3]; n++) {
            const pts = [];
            for (let t = b[0]; t < b[1]; t += 0.3) {
                const v = rnd() < 0.55 ? rnd() * 0.5 : Math.pow(rnd(), 2.2) * b[2];
                pts.push([x(t), y(v)]);
            }
            pts.push([x(b[1]), y(0)]);
            out += poly(pts, burstColors[Math.floor(rnd() * burstColors.length)]);
        }
    });
    Object.keys(cpu).forEach(k => {
        out += twoTone(pairs(cpu[k], x, y), colors[k]);
    });
    out += line(PLOT_LEFT, 210.5, w, 210.5, '#222');
    out += valueAxis(0, 80, y);
    out += timeAxis(ORIGIN, width, 211);
    el.insertAdjacentHTML('afterbegin', svg(w, 235, out));
}

/* disk usage, one list per visible spike */
const disk = [
    [10.2, 27, 10.4, 33, 10.6, 27], [12.5, 27, 12.7, 41.5, 12.9, 27],
    [14.2, 27, 14.6, 40.5, 14.9, 29, 15.3, 29.5, 15.4, 27],
    [16, 27, 16.6, 34, 16.9, 30, 17.2, 32, 17.6, 30, 18, 29, 18.5, 29.5, 19, 28.5, 19.3, 28.5, 19.4, 27],
    [20, 27, 20.2, 28.2, 20.8, 27], [35.9, 27, 36, 29.7, 36.1, 27], [41.1, 27, 41.3, 35, 41.6, 35, 41.7, 27],
    [43.8, 27, 43.9, 31.5, 44.1, 27], [46.4, 27, 46.5, 30.2, 46.6, 27], [66.4, 27, 66.5, 28, 66.6, 27],
    [80.8, 27, 81, 38, 81.3, 32, 81.6, 27, 82, 32, 82.3, 34.5, 82.4, 27], [84.9, 27, 85, 35, 85.2, 27],
    [90.1, 27, 90.3, 27.7, 90.5, 27], [99.8, 27, 100.1, 46.3, 100.4, 42, 100.8, 27],
    [101.7, 27, 102.1, 29.8, 102.2, 27], [108.5, 27, 108.6, 27.8, 108.7, 27], [109.8, 27, 109.9, 29.5, 110.1, 27],
    [117.4, 27, 117.7, 32.5, 118.2, 32.5, 118.4, 27]
];

function drawDisk() {
    const el = document.getElementById('disk-chart');
    const w = el.clientWidth;
    const x = t => ORIGIN + t / T1 * (w - ORIGIN);
    const y = v => 102 - (v - 27) * 4;
    let out = `<rect x="${w - 25}" y="17" width="25" height="85" fill="#e8e8e8"/>`;
    out += `<text x="${w / 2}" y="12" text-anchor="middle">Utilization per 3 Disks using resource time as [Complete Time-Disk Service Time,Complete Time] (Aggregation: Sum)</text>`;
    disk.forEach(d => {
        out += twoTone(pairs(d, x, y), colors.system);
    });
    out += valueAxis(27, 48, y);
    el.innerHTML = svg(w, 102, out);
}

function drawTimeline() {
    const el = document.getElementById('timeline-axis');
    const w = el.clientWidth;
    el.innerHTML = svg(w, 26, line(0, 0.5, w, 0.5, '#000') + timeAxis(-1, w + 1, 0));
}

/* explorer thumbnails, values run from 0 at the bottom to 1 */
const thumbs = {
    computation: [['#2a7ce0', [.06, 0, .07, .2, .09, .25, .1, .65, .115, .78, .13, .76, .15, .83, .18, .85, .2, .74, .23, .64, .245, .64, .26, .77, .29, .65, .305, .78, .32, .7, .335, .79, .35, .48, .365, .2, .38, .15, .395, .22, .41, .13, .425, .18, .44, .1, .455, .1, .47, .8, .485, .55, .5, .45, .515, .95, .53, .97, .545, .57, .56, .73, .575, .64, .61, .66, .63, .75, .645, .58, .66, .73, .675, .64, .69, .77, .71, .64, .735, .7, .755, .82, .785, .7, .8, .86, .815, .54, .83, .4, .845, .2, .875, .14, .89, .24, .905, .2, .92, .38, .935, .22, .95, .14, .97, .12, .985, .4, 1, 0]]],
    storage: [['#2a7ce0', [.03, 0, .055, 0, .07, .24, .085, .28, .1, .52, .12, .68, .135, .68, .15, .58, .18, .38, .19, .08, .22, .08, .25, .23, .27, .2, .3, .22, .315, .33, .33, .18, .37, 0, .455, 0, .47, .55, .485, .15, .5, 0, .52, .1, .56, .08, .575, .53, .59, .2, .605, .38, .62, .32, .635, .46, .665, .57, .68, .38, .71, .38, .725, .1, .74, .4, .77, .44, .8, .15, .83, .37, .85, .1, .87, .02, .89, .18, .905, .08, .92, .12, .95, .02, .97, .05, .985, .25, 1, .04]]],
    memory: [['#d84830', [0, .96, .06, .96, .07, .93, .11, .9, .15, .84, .18, .81, .24, .8, .33, .77, .46, .76, .48, .74, .62, .73, .66, .72, .78, .69, .8, .68, 1, .68]],
        ['#40c0e8', [.05, 0, .15, .02, .25, .04, .3, .06, .46, .06, .47, .08, .62, .08, .73, .11, 1, .11]]],
    profiles: [['#a020e8', [0, .97, 1, .97], 3]],
    parking: [['#6860b8', [0, .5, 1, .5], 2]],
    core: [['#e4e480', [0, .5, 1, .5], 2]],
    cap: [['#8078a8', [0, .5, 1, .5], 2]],
    performance: [['#7880c0', [0, .5, 1, .5], 2]],
    constraints: [['#d060a0', [0, .5, 1, .5], 2]]
};

function eventDots(w, h) {
    const palette = ['#c02880', '#6040c0', '#208090', '#b08020', '#4060d0', '#a01838', '#609030', '#903090', '#d030b0', '#2050a0'];
    const pick = () => palette[Math.floor(rnd() * palette.length)];
    let out = '<rect width="22" height="6" fill="#3a68e0"/><rect x="6" y="6" width="14" height="5" fill="#3a68e0"/>';
    // the palette is fixed per column, a few dots per row break out of it
    for (let x = 20; x < w; x += 3) {
        const c = pick();
        for (let r = 0; r < 6; r++) {
            const fill = rnd() < 0.55 ? c : pick();
            out += `<circle cx="${x}" cy="${r * 5 + 3}" r="2.6" fill="${fill}" stroke="#557" stroke-width=".6"/>`;
        }
    }
    out += `<rect x="34" y="30" width="${w - 36}" height="5" fill="#4a8030"/>`;
    out += `<rect x="25" y="36" width="${w - 27}" height="5" rx="2" fill="#403060"/>`;
    out += `<rect x="25" y="51" width="${w - 27}" height="4" rx="2" fill="#403060"/>`;
    for (let x = 35; x < 60; x += 5) {
        out += `<circle cx="${x}" cy="43.5" r="2" fill="#80a030"/>`;
    }
    for (let x = 26; x < w; x += 3) {
        out += `<circle cx="${x}" cy="48" r="2.5" fill="${pick()}"/>`;
        if (rnd() < 0.5) {
            out += `<circle cx="${x + 12}" cy="32.5" r="1.5" fill="${pick()}"/>`;
        }
    }
    out += '<circle cx="1" cy="23" r="2.5" fill="#8060c0"/><circle cx="14" cy="23" r="2.5" fill="#7050c0"/><circle cx="2" cy="48" r="2.5" fill="#8060c0"/><circle cx="14" cy="48" r="2.5" fill="#c03080"/>';
    return out;
}

function idleLines(x, y) {
    const shape = [.01, .02, .05, .02, .07, .7, .085, .97, .11, .75, .13, .7, .15, .25, .165, .12, .18, .5, .19, .97, .21, .9, .225, .7, .24, .85, .26, .6, .28, .85, .3, .8, .33, .9, .36, .97, .44, .98, .52, .97, .54, .7, .56, .4, .58, .6, .6, .85, .62, .7, .64, .8, .67, .9, .7, .75, .72, .9, .75, .8, .77, .7, .79, .5, .8, .45, .82, .75, .84, .97, .9, .98, .96, .97, .98, .85, 1, .95];
    let out = '';
    ['#e02850', '#e8b820', '#30d050', '#d06020', '#2080e0', '#e03080', '#2878d8'].forEach(c => {
        const list = shape.map((v, i) => i % 2 === 0 || v > .96 || v < .1 ? v : Math.max(.08, Math.min(.97, v + (rnd() - .6) * .4)));
        out += poly(pairs(list, x, y), c);
    });
    const low = [.01, .02, .055, .02, .085, .55, .1, .25, .13, .1, .15, .02, .2, .04, .22, .35, .26, .1, .29, .2, .33, .06, .36, .7, .38, .95, .45, .93, .465, .1, .48, .4, .5, .8, .52, .75, .54, .5, .56, .1, .58, .3, .61, .2, .63, .15, .66, .8, .67, .2, .69, .3, .71, .35, .73, .15, .76, .03, .8, .04, .82, .5, .86, .8, .9, .9, .92, .3, .94, .9, .97, .95, .98, .5, 1, .95];
    return out + poly(pairs(low, x, y), '#9030e0');
}

function drawThumbs() {
    document.querySelectorAll('.thumb').forEach(el => {
        const w = el.clientWidth;
        const h = el.clientHeight;
        const x = v => v * (w - 2);
        const y = v => h - 1 - v * (h - 2);
        const name = el.dataset.thumb;
        let out = name === 'events' ? '' : `<rect x="${w - 4}" width="4" height="${h}" fill="#e8e8e8"/>`;
        if (name === 'events') {
            out += eventDots(w, h);
        } else if (name === 'idle') {
            out += idleLines(x, y);
        } else {
            thumbs[name].forEach(s => {
                out += poly(pairs(s[1], x, y), s[0], `stroke-width="${s[2] || 1}"`);
            });
        }
        el.innerHTML = svg(w, h, out);
    });
}

function drawExplorerAxis() {
    const el = document.getElementById('explorer-axis');
    const w = el.clientWidth;
    let out = line(1, 0.5, w, 0.5, '#000');
    for (let t = 5; t <= 145; t += 5) {
        const x = Math.floor(t / 145 * (w - 1)) + 0.5;
        out += line(x, 1, x, t % 50 ? 7 : 13, t % 50 ? '#aaa' : '#000');
        if (t % 50 === 0) {
            out += `<text x="${x}" y="23" text-anchor="middle">${t}</text>`;
        }
    }
    out += '<text x="1" y="23">0</text>';
    el.innerHTML = svg(w, 25, out);
}

drawThumbs();
drawExplorerAxis();
drawRegions();
drawCpu();
drawDisk();
drawTimeline();
```
